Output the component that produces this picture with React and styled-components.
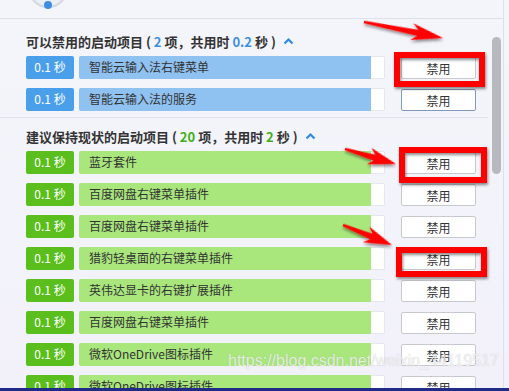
import React from 'react';
import styled, { createGlobalStyle } from 'styled-components';

const GlobalStyle = createGlobalStyle`
  html, body {
    margin: 0;
    padding: 0;
    background: #f3f3fa;
  }
  body {
    font-family: "Noto Sans CJK SC", "Noto Sans", sans-serif;
  }
`;

const palette = {
  blue: { badge: '#4a9fea', bar: '#8fc1f1', num: '#3b8fe0' },
  green: { badge: '#5abe1c', bar: '#a9e77d', num: '#3fae17' },
};

const Page = styled.div`
  position: relative;
  width: 509px;
  height: 391px;
  overflow: hidden;
  display: flex;
  flex-direction: column;
  background: linear-gradient(180deg, #f4f5fb 0%, #f2f1fa 100%);
`;

const Panel = styled.div`
  width: 503px;
  flex: 1;
  min-height: 0;
  display: flex;
  flex-direction: column;
  border-right: 1px solid #dde0e9;
`;

const TopStrip = styled.div`
  height: 18px;
  flex-shrink: 0;
  overflow: hidden;
  border-bottom: 1px solid #dfe1ea;
  padding-left: 28px;
`;

const Avatar = styled.div`
  width: 36px;
  height: 36px;
  margin-top: -32px;
  border-radius: 50%;
  background: #eceef3;
  border: 2px solid #d3d7df;
  display: flex;
  align-items: flex-end;
  justify-content: center;
  &:after {
    content: '';
    width: 8px;
    height: 8px;
    margin-bottom: -3px;
    border-radius: 50%;
    background: #3d8ee3;
  }
`;

const Body = styled.div`
  flex: 1;
  min-height: 0;
  display: flex;
  overflow: hidden;
`;

const List = styled.div`
  width: 488px;
  flex-shrink: 0;
`;

const Section = styled.div`
  padding: ${(p) => (p.first ? '13px' : '9px')} 0 6px 26px;
  border-top: ${(p) => (p.first ? 'none' : '1px solid #dfe1ea')};
`;

const Header = styled.div`
  height: 18px;
  display: flex;
  align-items: center;
  font-size: 13px;
  font-weight: bold;
  color: #333;
  margin-bottom: 6px;
  white-space: pre;
`;

const Num = styled.span`
  color: ${(p) => p.color};
`;

const Chevron = styled.svg`
  margin-left: 7px;
  width: 11px;
  height: 8px;
`;

const Rows = styled.div`
  display: flex;
  flex-direction: column;
  gap: 9px;
`;

const Row = styled.div`
  display: flex;
  height: 23px;
`;

const Badge = styled.div`
  width: 48px;
  flex-shrink: 0;
  border-radius: 2px;
  background: ${(p) => p.color};
  color: #fff;
  font-size: 12px;
  font-weight: normal;
  line-height: 21px;
  text-align: center;
  margin-right: 5px;
`;

const Bar = styled.div`
  width: 306px;
  flex-shrink: 0;
  box-sizing: border-box;
  background: #fff;
  border: 1px solid #e6e7ee;
  border-left: none;
  border-radius: 2px;
  display: flex;
`;

const Fill = styled.div`
  width: 292px;
  margin: -1px 0;
  border-radius: 2px 0 0 2px;
  background: ${(p) => p.color};
  color: #333;
  font-size: 12px;
  line-height: 22px;
  padding-left: 10px;
  box-sizing: border-box;
  white-space: nowrap;
`;

const DisableButton = styled.button`
  width: 75px;
  height: 22px;
  margin: 1px 0 0 16px;
  padding: 0;
  box-sizing: border-box;
  background: #fff;
  border: 1px solid ${(p) => (p.focused ? '#8199bd' : '#c8c9cd')};
  border-radius: 2px;
  font-family: "Noto Sans CJK SC", sans-serif;
  font-size: 12px;
  color: #333;
`;

const ScrollTrack = styled.div`
  flex: 1;
  padding: 18px 0 0 4px;
`;

const Thumb = styled.div`
  width: 9px;
  height: 137px;
  border-radius: 5px;
  background: #b6b9bd;
`;

const BottomEdge = styled.div`
  height: 3px;
  flex-shrink: 0;
  background: #1f2b86;
`;

const Overlay = styled.svg`
  position: absolute;
  left: 0;
  top: 0;
  pointer-events: none;
`;

const Watermark = styled.div`
  position: absolute;
  left: 228px;
  top: 352px;
  font-family: "Liberation Sans", Arial, sans-serif;
  font-size: 16px;
  color: rgba(255, 255, 255, 0.75);
  text-shadow: 0 0 1px rgba(120, 120, 130, 0.45);
  white-space: nowrap;
  pointer-events: none;
`;

const sections = [
  {
    title: '可以禁用的启动项目',
    count: '2',
    time: '0.2',
    tone: 'blue',
    items: ['智能云输入法右键菜单', '智能云输入法的服务'],
  },
  {
    title: '建议保持现状的启动项目',
    count: '20',
    time: '2',
    tone: 'green',
    items: [
      '蓝牙套件',
      '百度网盘右键菜单插件',
      '百度网盘右键菜单插件',
      '猎豹轻桌面的右键菜单插件',
      '英伟达显卡的右键扩展插件',
      '百度网盘右键菜单插件',
      '微软OneDrive图标插件',
      '微软OneDrive图标插件',
    ],
  },
];

const arrows = [
  { x1: 364, y1: 22, x2: 443, y2: 38, head: 32 },
  { x1: 345, y1: 149, x2: 396, y2: 164, head: 28 },
  { x1: 343, y1: 225, x2: 392, y2: 245, head: 28 },
];

const boxes = [
  { x: 397, y: 55, w: 85, h: 29 },
  { x: 402, y: 150, w: 82, h: 30 },
  { x: 399, y: 250, w: 85, h: 24 },
];

function Arrow({ x1, y1, x2, y2, head }) {
  const len = Math.hypot(x2 - x1, y2 - y1);
  const angle = (Math.atan2(y2 - y1, x2 - x1) * 180) / Math.PI;
  const h = head;
  const pts = [
    [0, -1.2],
    [len - h * 0.8, -3],
    [len - h, -8.5],
    [len, 0],
    [len - h, 8.5],
    [len - h * 0.8, 3],
    [0, 1.2],
  ]
    .map((p) => p.join(','))
    .join(' ');
  return (
    <polygon
      points={pts}
      fill="#f00"
      transform={`translate(${x1} ${y1}) rotate(${angle})`}
      filter="url(#shade)"
    />
  );
}

export default function App() {
  return (
    <>
      <GlobalStyle />
      <Page>
        <Panel>
          <TopStrip>
            <Avatar />
          </TopStrip>
          <Body>
            <List>
              {sections.map((s, si) => {
                const c = palette[s.tone];
                return (
                  <Section key={si} first={si === 0}>
                    <Header>
                      {s.title} ( <Num color={c.num}>{s.count}</Num> 项，共用时 <Num color={c.num}>{s.time}</Num> 秒 )
                      <Chevron viewBox="0 0 11 8">
                        <path d="M1.5 6.5 L5.5 2.5 L9.5 6.5" fill="none" stroke="#2f8ae2" strokeWidth="2.2" />
                      </Chevron>
                    </Header>
                    <Rows>
                      {s.items.map((name, i) => (
                        <Row key={i}>
                          <Badge color={c.badge}>0.1 秒</Badge>
                          <Bar>
                            <Fill color={c.bar}>{name}</Fill>
                          </Bar>
                          <DisableButton focused={si === 0 && i === 1}>禁用</DisableButton>
                        </Row>
                      ))}
                    </Rows>
                  </Section>
                );
              })}
            </List>
            <ScrollTrack>
              <Thumb />
            </ScrollTrack>
          </Body>
        </Panel>
        <BottomEdge />
        <Watermark>https://blog.csdn.net/weixin_44119517</Watermark>
        <Overlay width="509" height="391" viewBox="0 0 509 391">
          <defs>
            <filter id="shade" x="-20%" y="-40%" width="140%" height="180%">
              <feDropShadow dx="1" dy="2" stdDeviation="1.5" floodColor="#000" floodOpacity="0.45" />
            </filter>
          </defs>
          {boxes.map((b, i) => (
            <rect
              key={i}
              x={b.x}
              y={b.y}
              width={b.w}
              height={b.h}
              fill="none"
              stroke="#f00"
              strokeWidth="6"
              filter="url(#shade)"
            />
          ))}
          {arrows.map((a, i) => (
            <Arrow key={i} {...a} />
          ))}
        </Overlay>
      </Page>
    </>
  );
}
